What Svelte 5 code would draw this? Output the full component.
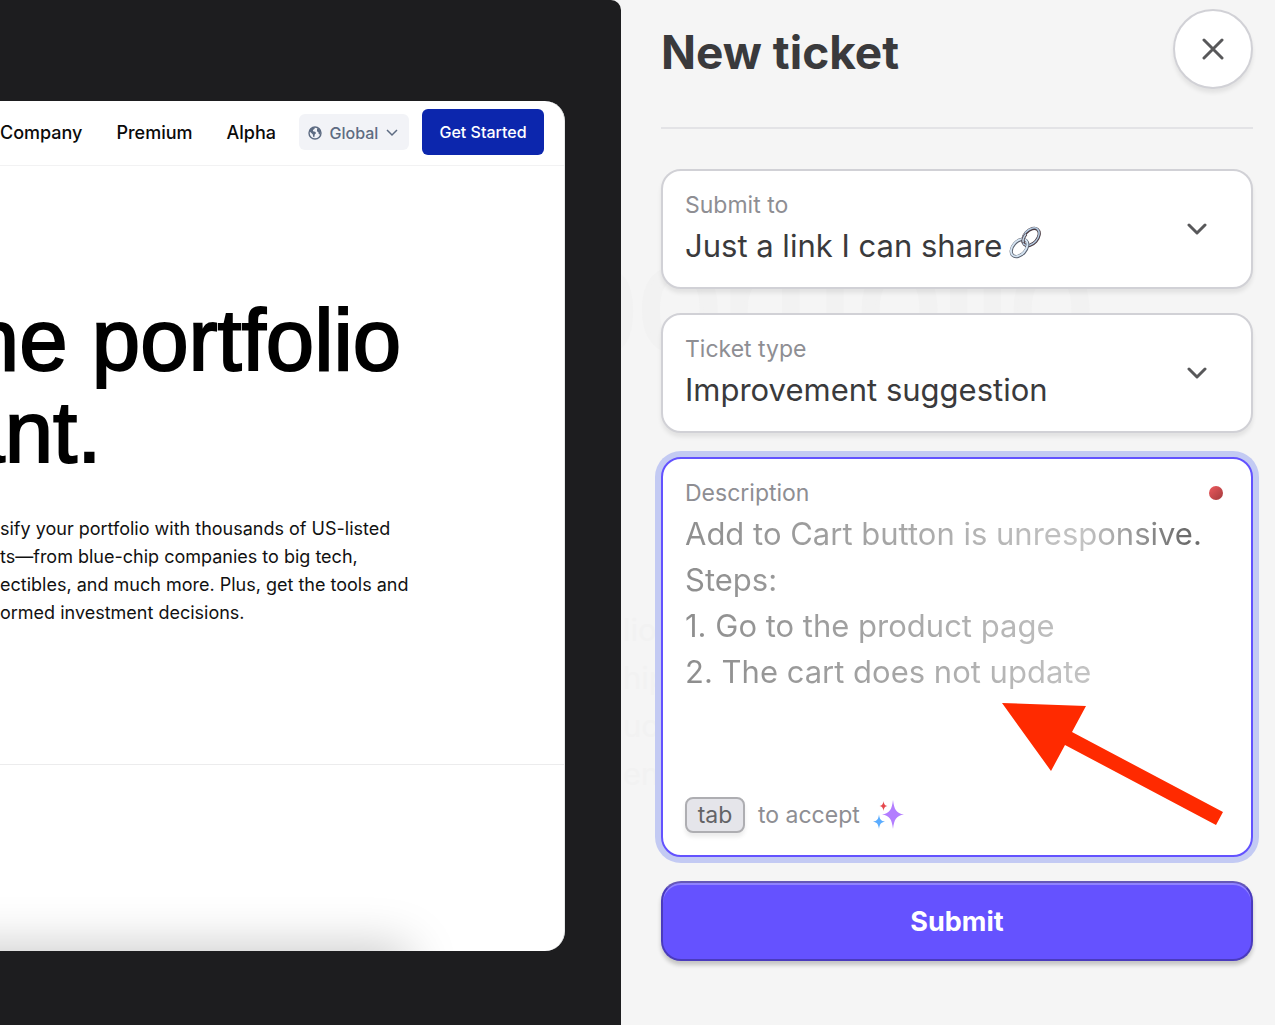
<script>
	let submitTo = $state('Just a link I can share');
	let ticketType = $state('Improvement suggestion');
	let description = $state(
		'Add to Cart button is unresponsive.\nSteps:\n1. Go to the product page\n2. The cart does not update'
	);

	const links = ['Company', 'Premium', 'Alpha'];
	const headline = ['Build the portfolio', 'you want.'];
	const intro = [
		'sify your portfolio with thousands of US-listed',
		'ts—from blue-chip companies to big tech,',
		'ectibles, and much more. Plus, get the tools and',
		'ormed investment decisions.'
	];
	const ghostIntro = ['lio', 'hip', 'uch', 'ent'];
</script>

{#snippet chevron()}
	<svg class="chevron" viewBox="0 0 20 12" aria-hidden="true">
		<path d="M2 2l8 8 8-8" />
	</svg>
{/snippet}

<div class="page">
	<section class="stage">
		<div class="site">
			<nav class="nav">
				<div class="nav-links">
					{#each links as link}
						<a href="#{link.toLowerCase()}">{link}</a>
					{/each}
				</div>
				<button class="region">
					<svg class="globe" viewBox="0 0 14 14" aria-hidden="true">
						<circle cx="7" cy="7" r="6" />
						<path d="M2 3.5L5 1.2l1.8.3-.3 1.6-1.6.9.2 1.2 2 .5 1 1.4-1.300 1.500-.5 2.600-1-.2-.6-2.700-1.700-1.500L1.300 5zM9 2.200l2.500 1 1.200 3-.6 2.500-1.400-.6-.3-1.800-1.400-1z" />
					</svg>
					Global
					<svg class="region-arrow" viewBox="0 0 12 8" aria-hidden="true">
						<path d="M1 1l5 5 5-5" />
					</svg>
				</button>
				<button class="started">Get Started</button>
			</nav>

			<div class="hero">
				<h1>
					{#each headline as line}
						<span class="line">{line}</span>
					{/each}
				</h1>
				<p class="intro">
					{#each intro as line}
						<span class="line">{line}</span>
					{/each}
				</p>
			</div>

			<div class="below">
				<div class="shade"></div>
			</div>
		</div>
	</section>

	<aside class="panel">
		<!-- page text showing through the frosted panel -->
		<div class="ghost" aria-hidden="true">
			<div class="ghost-title">portfolio</div>
			<div class="ghost-intro">
				{#each ghostIntro as line}
					<span class="line">{line}</span>
				{/each}
			</div>
		</div>

		<header>
			<h2>New ticket</h2>
			<button class="close" aria-label="Close">
				<svg viewBox="0 0 22 22" aria-hidden="true">
					<path d="M2 2l18 18M20 2L2 20" />
				</svg>
			</button>
		</header>

		<form onsubmit={(e) => e.preventDefault()}>
			<div class="field">
				<div class="field-body">
					<label for="submit-to">Submit to</label>
					<div class="value">
						<select id="submit-to" bind:value={submitTo}>
							<option>Just a link I can share</option>
						</select>
						<svg class="link-icon" viewBox="0 0 34 34" aria-hidden="true">
							<g fill="none">
								<ellipse cx="23" cy="11" rx="6.5" ry="10" transform="rotate(42 23 11)" stroke="#4a3b42" stroke-width="3.2" />
								<ellipse cx="22.700" cy="10.700" rx="6.700" ry="10.200" transform="rotate(42 22.700 10.700)" stroke="#b4cbe2" stroke-width="1.500" />
								<ellipse cx="11.500" cy="22" rx="6.500" ry="10" transform="rotate(42 11.500 22)" stroke="#59606e" stroke-width="3.200" />
								<ellipse cx="11.200" cy="21.700" rx="6.500" ry="10" transform="rotate(42 11.200 21.700)" stroke="#d5e4f2" stroke-width="1.900" />
								<path d="M15.500 17c-1.200-2.500.2-6 2.500-8.800" stroke="#4a3b42" stroke-width="3" />
								<path d="M15.300 16.500c-1-2.500.4-5.500 2.500-8.300" stroke="#c5d6e6" stroke-width="1.500" />
							</g>
						</svg>
					</div>
				</div>
				{@render chevron()}
			</div>

			<div class="field">
				<div class="field-body">
					<label for="ticket-type">Ticket type</label>
					<div class="value">
						<select id="ticket-type" bind:value={ticketType}>
							<option>Improvement suggestion</option>
						</select>
					</div>
				</div>
				{@render chevron()}
			</div>

			<div class="description">
				<div class="caption">
					<label for="description">Description</label>
					<span class="dot"></span>
				</div>
				<textarea id="description" rows="5" spellcheck="false" bind:value={description}></textarea>
				<div class="hint">
					<kbd>tab</kbd>
					<span>to accept</span>
					<svg class="sparkles" viewBox="0 0 32 30" aria-hidden="true">
						<path fill="#b37dff" d="M20 0c1.200 9.500 3 13.200 11 14.500-8 1.300-9.800 5-11 14.500-1.200-9.500-3-13.200-11-14.500C17 13.200 18.800 9.500 20 0z" />
						<path fill="#5aacff" d="M6 14.500c.7 4.800 1.700 6.400 6 7.200-4.300.8-5.300 2.400-6 7.300-.7-4.900-1.700-6.500-6-7.300 4.300-.8 5.300-2.400 6-7.200z" />
						<path fill="#e5484d" d="M10.500 1c.5 3.300 1.200 4.400 4 5-2.800.6-3.500 1.700-4 5-.5-3.300-1.200-4.400-4-5 2.800-.6 3.500-1.700 4-5z" />
					</svg>
				</div>
				<svg class="arrow" viewBox="0 0 222 124" aria-hidden="true">
					<path fill="#ff2a00" d="M0 2l84 3-14 26 151 80-7 13-151-80-14 26z" />
				</svg>
			</div>

			<button class="submit" type="submit">Submit</button>
		</form>
	</aside>
</div>

<style>
	:global(body) {
		margin: 0;
		background: #f5f5f5;
	}

	.page {
		display: grid;
		grid-template-columns: minmax(0, 1fr) 654px;
		min-height: 100vh;
		font-family: Inter, 'Liberation Sans', sans-serif;
	}

	.page :is(button, select, textarea) {
		font-family: inherit;
	}

	.line {
		display: block;
		white-space: nowrap;
	}

	/* site preview */
	.stage {
		display: flex;
		box-sizing: border-box;
		padding: 101px 56px 74px 0;
		background: #1d1d1f;
		border-top-right-radius: 10px;
		overflow: hidden;
	}

	.site {
		display: flex;
		flex-direction: column;
		flex: 1;
		box-sizing: border-box;
		min-width: 0;
		background: #fff;
		border-right: 1px solid #e6e8e8;
		border-radius: 0 20px 20px 0;
		overflow: hidden;
	}

	.nav {
		display: flex;
		align-items: center;
		justify-content: flex-end;
		height: 62px;
		padding: 0 20px 2px 0;
		border-bottom: 1px solid #f2f2f3;
	}

	.nav-links {
		display: flex;
		gap: 34px;
		margin-right: 23px;
	}

	.nav-links a {
		color: #0a0a0a;
		font-size: 18px;
		font-weight: 500;
		text-decoration: none;
	}

	.region {
		display: flex;
		flex: none;
		align-items: center;
		justify-content: space-between;
		width: 110px;
		height: 36px;
		padding: 2px 11px 0 9px;
		border: none;
		border-radius: 6px;
		background: #f2f3f7;
		color: #5d6b82;
		font-size: 16px;
		font-weight: 500;
	}

	.globe {
		width: 14px;
		height: 14px;
	}

	.globe circle {
		fill: none;
		stroke: #5d6b82;
		stroke-width: 1.4;
	}

	.globe path {
		fill: #5d6b82;
	}

	.region-arrow {
		width: 12px;
		height: 8px;
		fill: none;
		stroke: #5d6b82;
		stroke-width: 1.5;
	}

	.started {
		flex: none;
		width: 122px;
		height: 46px;
		margin-left: 13px;
		padding: 0;
		border: none;
		border-radius: 6px;
		background: #0c26ad;
		color: #fff;
		font-size: 16px;
		font-weight: 500;
	}

	.hero {
		height: 599px;
		box-sizing: border-box;
		padding-top: 128px;
		border-bottom: 1px solid #ececed;
	}

	/* the preview is scrolled sideways, so the headline starts off screen */
	h1 {
		margin: 0 0 0 -271px;
		color: #000;
		font-family: 'Liberation Sans', Arial, sans-serif;
		font-size: 87px;
		font-weight: 400;
		line-height: 92px;
		-webkit-text-stroke: 2px #000;
	}

	.intro {
		margin: 37px 0 0;
		color: #111;
		font-size: 18px;
		line-height: 28px;
	}

	.below {
		position: relative;
		flex: 1;
		min-height: 185px;
	}

	.shade {
		position: absolute;
		top: 100%;
		right: 160px;
		left: -60px;
		height: 60px;
		box-shadow: 0 0 50px 4px rgba(0, 0, 0, 0.22);
	}

	/* ticket panel */
	.panel {
		position: relative;
		padding: 9px 22px 60px 40px;
		background: #f5f5f5;
		overflow: hidden;
	}

	.ghost {
		position: absolute;
		inset: 0;
		color: #f2f2f2;
		pointer-events: none;
	}

	.ghost-title {
		position: absolute;
		top: 210px;
		left: -68px;
		font-family: 'Liberation Sans', Arial, sans-serif;
		font-size: 152px;
		line-height: 176px;
		-webkit-text-stroke: 4px #f2f2f2;
	}

	.ghost-intro {
		position: absolute;
		top: 606px;
		left: 2px;
		font-size: 31px;
		line-height: 48px;
	}

	header {
		position: relative;
		display: flex;
		align-items: center;
		justify-content: space-between;
		padding-bottom: 38px;
		border-bottom: 2px solid #e3e3e6;
	}

	h2 {
		margin: 0;
		padding-top: 6px;
		color: #3a3a3c;
		font-size: 46px;
		font-weight: 700;
		line-height: 56px;
	}

	.close {
		display: grid;
		place-items: center;
		width: 80px;
		height: 80px;
		padding: 0;
		border: 2px solid #d1d1d6;
		border-radius: 50%;
		background: #fff;
		box-shadow: 0 4px 4px rgba(0, 0, 0, 0.08);
	}

	.close svg {
		width: 22px;
		height: 22px;
		stroke: #58585a;
		stroke-width: 3;
		stroke-linecap: round;
	}

	form {
		position: relative;
		display: flex;
		flex-direction: column;
		gap: 24px;
		margin-top: 40px;
	}

	.field,
	.description {
		box-sizing: border-box;
		border: 2px solid #d1d1d6;
		border-radius: 20px;
		background: #fff;
	}

	.field {
		display: flex;
		align-items: center;
		justify-content: space-between;
		height: 120px;
		padding: 0 44px 0 22px;
		box-shadow: 0 4px 4px rgba(0, 0, 0, 0.08);
	}

	.field-body {
		padding-top: 2px;
	}

	label,
	.hint {
		color: #8e8e93;
		font-size: 23px;
		line-height: 32px;
	}

	label {
		display: block;
	}

	.value {
		display: flex;
		align-items: center;
		gap: 6px;
		height: 50px;
	}

	select {
		field-sizing: content;
		appearance: none;
		padding: 0;
		border: none;
		background: none;
		color: #3a3a3c;
		font-size: 31px;
		line-height: 46px;
		outline: none;
	}

	.link-icon {
		width: 34px;
		height: 34px;
		margin-bottom: 6px;
	}

	.chevron {
		width: 20px;
		height: 12px;
		fill: none;
		stroke: #58585a;
		stroke-width: 3;
		stroke-linecap: round;
		stroke-linejoin: round;
	}

	.description {
		position: relative;
		padding: 18px 22px 22px;
		border-color: #6352ff;
		box-shadow: 0 0 0 6px #c3caf3;
	}

	.caption {
		display: flex;
		align-items: center;
		justify-content: space-between;
		padding-right: 6px;
	}

	.dot {
		width: 14px;
		height: 14px;
		border-radius: 50%;
		background: linear-gradient(135deg, #ee5a5e, #a33a3c);
	}

	textarea {
		display: block;
		box-sizing: border-box;
		width: 100%;
		height: 288px;
		padding: 2px 0;
		border: none;
		outline: none;
		resize: none;
		overflow: hidden;
		background: linear-gradient(85deg, #8c8c8c, #a6a6a6 40%, #c4c4c4 74%, #6c6c6c 92%);
		background-clip: text;
		-webkit-background-clip: text;
		color: transparent;
		font-size: 31px;
		line-height: 46px;
	}

	.hint {
		display: flex;
		align-items: center;
		gap: 13px;
	}

	kbd {
		box-sizing: border-box;
		width: 60px;
		height: 36px;
		border: 2px solid #aeaeb2;
		border-radius: 8px;
		background: #e5e5ea;
		box-shadow: 0 4px 4px rgba(0, 0, 0, 0.08);
		color: #636366;
		font-family: inherit;
		font-size: 23px;
		line-height: 32px;
		text-align: center;
	}

	.sparkles {
		width: 32px;
		height: 30px;
	}

	/* annotation pointing at the suggested text */
	.arrow {
		position: absolute;
		right: 27px;
		bottom: 30px;
		width: 222px;
		height: 124px;
		pointer-events: none;
	}

	.submit {
		height: 80px;
		border: 2px solid #4a3bbd;
		border-top-color: #6558b8;
		border-radius: 20px;
		background: #6552ff;
		box-shadow:
			inset 0 2px 0 #8f82ff,
			0 4px 4px rgba(0, 0, 0, 0.2);
		color: #fff;
		font-size: 27px;
		font-weight: 700;
	}
</style>
